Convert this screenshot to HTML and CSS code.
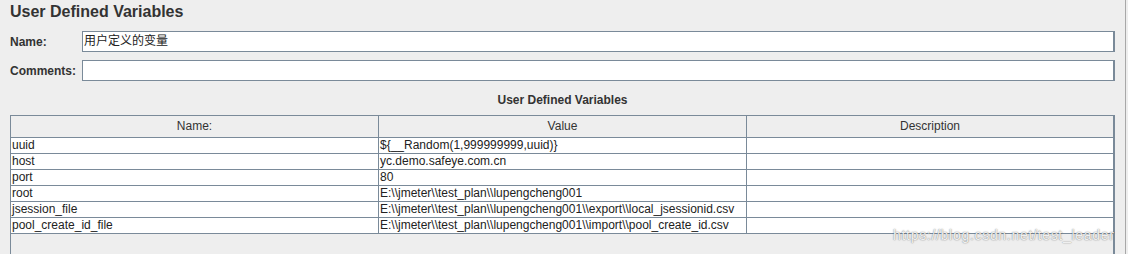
FILE: index.html
```html
<!DOCTYPE html>
<html>
<head>
<meta charset="utf-8">
<title>User Defined Variables</title>
<link rel="stylesheet" href="styles.css">
</head>
<body>
<div class="page">
  <h1 class="title">User Defined Variables</h1>
  <div class="field-row">
    <label class="label">Name:</label>
    <div class="input">用户定义的变量</div>
  </div>
  <div class="field-row">
    <label class="label">Comments:</label>
    <div class="input"></div>
  </div>
  <div class="table-title">User Defined Variables</div>
  <div class="scroll">
    <div class="grid">
      <div class="th">Name:</div><div class="th">Value</div><div class="th last">Description</div>
      <div class="td">uuid</div><div class="td">${__Random(1,999999999,uuid)}</div><div class="td last"></div>
      <div class="td">host</div><div class="td">yc.demo.safeye.com.cn</div><div class="td last"></div>
      <div class="td">port</div><div class="td">80</div><div class="td last"></div>
      <div class="td">root</div><div class="td">E:\\jmeter\\test_plan\\lupengcheng001</div><div class="td last"></div>
      <div class="td">jsession_file</div><div class="td">E:\\jmeter\\test_plan\\lupengcheng001\\export\\local_jsessionid.csv</div><div class="td last"></div>
      <div class="td">pool_create_id_file</div><div class="td">E:\\jmeter\\test_plan\\lupengcheng001\\import\\pool_create_id.csv</div><div class="td last"></div>
    </div>
  </div>
  <div class="watermark">https://blog.csdn.net/test_leader</div>
</div>
</body>
</html>
```
FILE: styles.css
```css
html, body {
  margin: 0;
  padding: 0;
  background: #eeeeee;
  overflow: hidden;
}
body {
  font-family: "Liberation Sans", Arial, "Noto Sans CJK SC", sans-serif;
  color: #333333;
}
.page {
  position: relative;
  width: 1126px;
  height: 254px;
  box-sizing: border-box;
  padding: 0 10px;
  border-right: 1px solid #a8a8a8;
  overflow: hidden;
}
.title {
  margin: 0 0 9px 0;
  padding-top: 2px;
  font-size: 16px;
  line-height: 20px;
  font-weight: bold;
  color: #333333;
}
.field-row {
  display: flex;
  align-items: center;
  height: 21px;
  margin-bottom: 8px;
}
.field-row + .field-row {
  margin-bottom: 0;
}
.label {
  width: 72px;
  flex: none;
  font-size: 12px;
  font-weight: bold;
  color: #333333;
}
.input {
  flex: 1;
  height: 21px;
  box-sizing: border-box;
  background: #ffffff;
  border: 1px solid #7a8a99;
  border-right-width: 2px;
  padding-left: 1px;
  font-size: 12px;
  line-height: 19px;
  color: #222222;
  font-family: "Liberation Sans", "Noto Sans CJK SC", sans-serif;
}
.table-title {
  text-align: center;
  font-size: 12px;
  font-weight: bold;
  line-height: 15px;
  padding: 12px 0 7px 0;
  color: #333333;
}
.scroll {
  height: 200px;
  box-sizing: border-box;
  border: 1px solid #7a8a99;
  border-right-width: 2px;
  border-bottom: none;
}
.grid {
  display: grid;
  grid-template-columns: 368px 368px 1fr;
}
.th {
  height: 22px;
  box-sizing: border-box;
  border-right: 1px solid #7a8a99;
  border-bottom: 1px solid #7a8a99;
  background: #eeeeee;
  text-align: center;
  font-size: 12px;
  line-height: 21px;
  color: #333333;
}
.td {
  height: 16px;
  box-sizing: border-box;
  border-right: 1px solid #7a8a99;
  border-bottom: 1px solid #7a8a99;
  background: #ffffff;
  padding-left: 1px;
  font-size: 12px;
  line-height: 15px;
  color: #222222;
  white-space: nowrap;
  overflow: hidden;
}
.last {
  border-right: none;
}
.watermark {
  position: absolute;
  left: 893px;
  top: 227px;
  font-size: 14px;
  line-height: 16px;
  letter-spacing: 0.7px;
  color: rgba(255, 255, 255, 0.9);
  text-shadow: 0 0 1px rgba(0, 0, 0, 0.45), 0 0 2px rgba(0, 0, 0, 0.25);
  white-space: nowrap;
}
```
